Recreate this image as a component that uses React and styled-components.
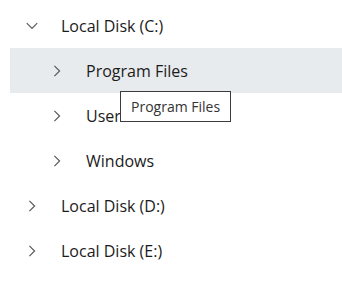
import React from "react";
import styled, { createGlobalStyle } from "styled-components";

const GlobalStyle = createGlobalStyle`
  body {
    margin: 0;
    background: #ffffff;
    font-family: "Open Sans", "Noto Sans", sans-serif;
  }
`;

const Tree = styled.div`
  padding: 3px 0 0 10px;
  width: 332px;
`;

const Row = styled.div`
  position: relative;
  display: flex;
  align-items: center;
  height: 45px;
  padding-left: ${(p) => 16 + p.level * 25}px;
  background: ${(p) => (p.selected ? "#e8ebee" : "transparent")};
`;

const Chevron = styled.span`
  display: flex;
  align-items: center;
  justify-content: center;
  width: 12px;
  height: 12px;
  margin-right: 23px;
  color: #5a5a5a;
`;

const Label = styled.span`
  font-size: 16px;
  color: #1b1b1b;
  white-space: nowrap;
`;

const Tooltip = styled.div`
  position: absolute;
  left: 110px;
  top: 43px;
  z-index: 2;
  padding: 5px 10px 5px 10px;
  line-height: 19px;
  background: #ffffff;
  border: 1px solid #3c3c3c;
  font-size: 14px;
  color: #333333;
  white-space: nowrap;
`;

const ChevronIcon = ({ open }) => (
  <svg width="12" height="12" viewBox="0 0 12 12" fill="none">
    {open ? (
      <path d="M0.8 3.2 L6 8.4 L11.2 3.2" stroke="currentColor" strokeWidth="1.2" />
    ) : (
      <path d="M3.4 0.8 L8.6 6 L3.4 11.2" stroke="currentColor" strokeWidth="1.2" />
    )}
  </svg>
);

const items = [
  { label: "Local Disk (C:)", level: 0, open: true },
  { label: "Program Files", level: 1, selected: true, tooltip: true },
  { label: "Users", level: 1 },
  { label: "Windows", level: 1 },
  { label: "Local Disk (D:)", level: 0 },
  { label: "Local Disk (E:)", level: 0 },
];

export default function App() {
  return (
    <>
      <GlobalStyle />
      <Tree>
        {items.map((item) => (
          <Row key={item.label} level={item.level} selected={item.selected}>
            <Chevron>
              <ChevronIcon open={item.open} />
            </Chevron>
            <Label>{item.label}</Label>
            {item.tooltip && <Tooltip>Program Files</Tooltip>}
          </Row>
        ))}
      </Tree>
    </>
  );
}
